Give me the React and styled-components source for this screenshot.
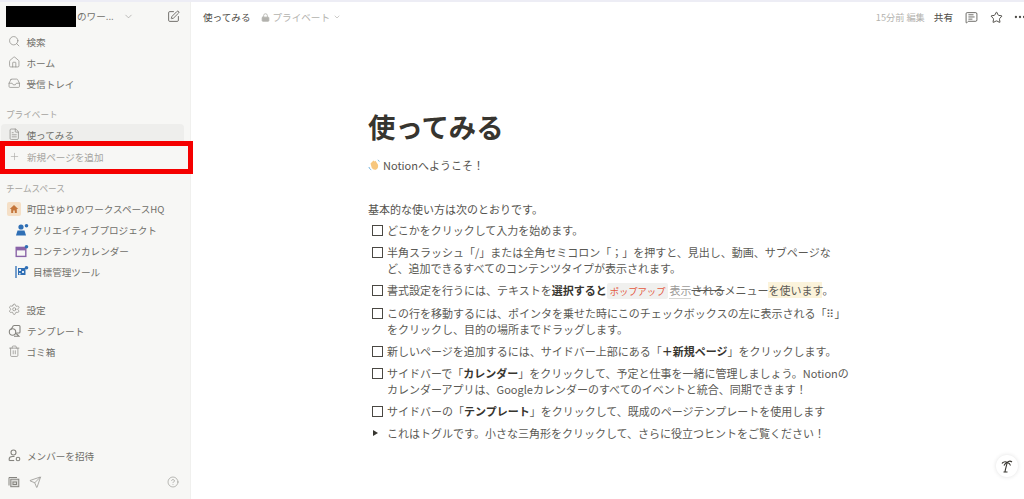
import React from 'react';
import styled, { createGlobalStyle } from 'styled-components';
import { Search, Home, Inbox, FileText, Plus, Settings, Trash2, Send, CircleHelp, SquarePen, ChevronDown, Lock, MessageSquareText, Star, Ellipsis } from 'lucide-react';

const Global = createGlobalStyle`
  html, body { margin: 0; padding: 0; background: #fff; }
  body { font-family: "Noto Sans CJK JP", "Noto Sans", sans-serif; color: #37352f; overflow: hidden; }
  * { box-sizing: border-box; }
`;
const Page = styled.div`
  width: 1024px; height: 499px; display: flex; flex-direction: column; position: relative; overflow: hidden;
`;
const TopLine = styled.div`height: 2px; background: #ededf5; flex: none;`;
const Body = styled.div`flex: 1; display: flex; min-height: 0;`;
const Sidebar = styled.aside`
  width: 191px; flex: none; background: #f7f7f5; border-right: 1px solid #f0f0ee; display: flex; flex-direction: column; position: relative;
`;
const Workspace = styled.div`
  height: 29px; padding: 0 10px 1px 6px; display: flex; align-items: center; color: #6f6e69; font-size: 9.6px;
`;
const Redact = styled.div`width: 70px; height: 21px; background: #000; flex: none;`;
const WsName = styled.span`white-space: nowrap; margin-left: 1px;`;
const WsChevron = styled.span`margin-left: 9px; display: flex; color: #9b9a97;`;
const WsEdit = styled.span`margin-left: auto; display: flex; color: #55534e;`;
const Nav = styled.nav`display: flex; flex-direction: column; margin-top: ${p => p.$top || 0}px;`;
const Row = styled.div`
  height: 21px; display: flex; align-items: center; gap: ${p => p.$gap || 6}px; padding-left: ${p => p.$indent || 7}px; margin: ${p => p.$mt || 0}px 6px 0 1px;
  font-size: 9.6px; color: ${p => p.$muted ? '#a5a4a0' : '#6f6e69'}; border-radius: 4px; white-space: nowrap;
  background: ${p => p.$active ? '#eeeeec' : 'transparent'};
  svg { flex: none; color: ${p => p.$muted ? '#a5a4a0' : '#85847f'}; }
`;
const SectionLabel = styled.div`
  height: 14px; margin-top: ${p => p.$top}px; margin-bottom: ${p => p.$bottom}px; padding-left: 6px; font-size: 8.6px; line-height: 14px; color: #a5a4a0;
`;
const HqIcon = styled.span`
  width: 14px; height: 14px; margin-left: -1px; border-radius: 2px; background: #f5dfc6; display: flex; align-items: center; justify-content: center;
`;
const Spacer = styled.div`flex: 1;`;
const BottomBar = styled.div`
  height: 26px; margin: 3px 0 4px; padding: 0 11px 0 8px; display: flex; align-items: center; gap: 9px; color: #85847f;
`;
const HelpWrap = styled.span`margin-left: auto; display: flex;`;
const RedBox = styled.div`
  position: absolute; left: 0; top: 139px; width: 193px; height: 33px; border: 5px solid #f50000; z-index: 2;
`;
const Main = styled.main`flex: 1; display: flex; flex-direction: column; min-width: 0; position: relative;`;
const Header = styled.header`
  height: 30px; flex: none; display: flex; align-items: center; padding-left: 12px; font-size: 9.6px; white-space: nowrap;
`;
const Crumb = styled.span`color: #4e4c47;`;
const Privacy = styled.span`
  display: flex; align-items: center; gap: 3px; margin-left: 10px; color: #b3b2ae;
  svg.lock rect { fill: currentColor; }
`;
const HeaderRight = styled.div`margin-left: auto; display: flex; align-items: center; height: 100%; color: #4e4c47; margin-right: -3px;`;
const Edited = styled.span`color: #b3b2ae; font-size: 9.2px; margin-right: 9px;`;
const Share = styled.span`margin-right: 12px;`;
const HIcon = styled.span`display: flex; margin-right: ${p => p.$gap}px; color: #4e4c47;`;
const Article = styled.article`
  width: 484px; margin-left: 177px; padding-top: 75px; display: flex; flex-direction: column;
`;
const Title = styled.h1`
  margin: 0; font-size: 27.4px; line-height: 38px; font-weight: 700; color: #37352f;
`;
const Welcome = styled.p`
  margin: 12px 0 0; height: 16px; font-size: 11px; line-height: 16px; color: #55534e; display: flex; align-items: center; gap: 3px;
`;
const Intro = styled.p`
  margin: 28px 0 0; font-size: 11px; line-height: 16px; color: #55534e;
`;
const List = styled.ul`list-style: none; margin: 2px 0 0; padding: 0; display: flex; flex-direction: column;`;
const Item = styled.li`
  display: flex; padding: 3px 0; font-size: 11px; line-height: 16.05px; color: #5b5a55;
`;
const Check = styled.span`
  width: 11px; height: 11px; flex: none; margin: 3px 4px 0 4px; border: 1.4px solid #4a4843;
`;
const Toggle = styled.span`
  width: 0; height: 0; flex: none; margin: 5px 9px 0 5px; border-left: 5px solid #37352f; border-top: 3.2px solid transparent; border-bottom: 3.2px solid transparent;
`;
const ItemText = styled.span`flex: 1; white-space: nowrap;`;
const Strong = styled.b`font-weight: 700; color: #37352f;`;
const Code = styled.span`
  color: #e4593f; background: #f0f0ee; border-radius: 2px; padding: 1px 3px; margin: 0 1px 0 0; font-size: 9.3px;
`;
const Under = styled.span`color: #9b9a97; border-bottom: 1px solid #d8d8d5;`;
const Strike = styled.span`text-decoration: line-through; color: #5b5a55;`;
const Mark = styled.span`background: #fbf3db;`;
const FloatBtn = styled.div`
  position: absolute; right: 6px; bottom: 22px; width: 22px; height: 22px; border-radius: 50%; background: #fff; box-shadow: 0 0 4px rgba(0,0,0,.12);
  display: flex; align-items: center; justify-content: center;
`;

const s = { size: 12.5, strokeWidth: 1.3 };

const ProjectIcon = () => (
  <svg width="14" height="14" viewBox="0 0 14 14">
    <circle cx="6" cy="4" r="2.6" fill="#2f6fb5" />
    <path d="M1 12.5 2.5 7.5h7L11 12.5Z" fill="#2f6fb5" />
    <circle cx="11.5" cy="2.8" r="1.8" fill="#2f6fb5" />
  </svg>
);
const CalIcon = () => (
  <svg width="14" height="14" viewBox="0 0 14 14">
    <rect x="1.2" y="3.4" width="9.6" height="9" fill="none" stroke="#8a64a8" strokeWidth="1.4" />
    <rect x="1.2" y="3.4" width="9.6" height="3" fill="#8a64a8" />
    <circle cx="11.5" cy="2.8" r="1.8" fill="#2f6fb5" />
  </svg>
);
const GoalIcon = () => (
  <svg width="14" height="14" viewBox="0 0 14 14">
    <path d="M1 1v12" stroke="#2f6fb5" strokeWidth="1.3" />
    <path d="M3 3h7.5v7H3Z" fill="#2f6fb5" />
    <path d="M4 4h2v2H4Zm3 2h2v2H7Zm-3 2h1.600v1.500H4Z" fill="#dfe9f4" />
    <circle cx="11.5" cy="2.8" r="1.8" fill="#2f6fb5" />
  </svg>
);
const HouseIcon = () => (
  <svg width="10" height="10" viewBox="0 0 10 10">
    <path d="M5 1 .8 5h1.400v4h2V6.500h1.600V9h2V5h1.400Z" fill="#c4753a" />
  </svg>
);
const TemplateIcon = () => (
  <svg width="13" height="13" viewBox="0 0 13 13" fill="none" stroke="currentColor" strokeWidth="1.100">
    <path d="M5.500 1.500h5.500a1 1 0 0 1 1 1V8a1 1 0 0 1-1 1H8.200" />
    <path d="M5.500 1.500 2.800 5.800" />
    <circle cx="4.500" cy="8" r="3.200" />
    <path d="M8.200 9.500l2.800 2.800H6" />
  </svg>
);
const InviteIcon = () => (
  <svg width="13" height="13" viewBox="0 0 13 13" fill="none" stroke="currentColor" strokeWidth="1.100">
    <circle cx="5.500" cy="3.500" r="2.500" />
    <path d="M1.200 11.500V10c0-1.500 1.500-2.500 3.300-2.500h2" />
    <path d="M1.200 11.500h5" />
    <circle cx="10" cy="10" r="1.800" />
  </svg>
);
const WalletIcon = () => (
  <svg width="12" height="12" viewBox="0 0 12 12" fill="none" stroke="#85847f" strokeWidth="1">
    <path d="M1 9.500V1.500h8" />
    <rect x="2.800" y="3.200" width="8" height="7.500" fill="#dcdcd9" />
    <rect x="5" y="6" width="3.500" height="2.500" />
  </svg>
);
const Wave = () => (
  <svg width="12" height="12" viewBox="0 0 12 12">
    <path d="M2.500 4.500 5.500 1.500l1 1 1-.8 2.500 4c.5 2.500-.5 5-3 5-1.500 0-2.500-.7-3.300-2Z" fill="#f7c77e" />
    <path d="M1 8c.2 1.300 1 2.300 2.200 2.800M9.800 1c.8.300 1.300.9 1.500 1.600" stroke="#6fb2e0" strokeWidth="1" fill="none" />
  </svg>
);
const Palm = () => (
  <svg width="14" height="14" viewBox="0 0 14 14" fill="none" stroke="#37352f" strokeWidth="1.100">
    <path d="M5 13c.3-3 1.500-6 2.200-9.500M3.500 13h4" />
    <path d="M2 4.500C3 2.800 5.500 2.500 7.200 3.500c1.500-1.500 3.500-1.500 4.800-.5M7.200 3.500c1.500.3 3 1.500 3.300 3M7.200 3.500C6 4 4.500 5 4 6.500" />
  </svg>
);

export default function App() {
  return (
    <Page>
      <Global />
      <TopLine />
      <Body>
        <Sidebar>
          <Workspace>
            <Redact />
            <WsName>のワー...</WsName>
            <WsChevron><ChevronDown size={11} strokeWidth={1.4} /></WsChevron>
            <WsEdit><SquarePen size={13} strokeWidth={1.5} /></WsEdit>
          </Workspace>
          <Nav>
            <Row><Search {...s} />検索</Row>
            <Row><Home {...s} />ホーム</Row>
            <Row><Inbox {...s} />受信トレイ</Row>
          </Nav>
          <SectionLabel $top={13} $bottom={3}>プライベート</SectionLabel>
          <Nav>
            <Row $active><FileText {...s} />使ってみる</Row>
            <Row $muted $mt={1} $indent={8} $gap={7}><Plus size={11} strokeWidth={1.3} />新規ページを追加</Row>
          </Nav>
          <SectionLabel $top={14} $bottom={3}>チームスペース</SectionLabel>
          <Nav>
            <Row $gap={6}><HqIcon><HouseIcon /></HqIcon>町田さゆりのワークスペースHQ</Row>
            <Row $indent={14} $gap={4}><ProjectIcon />クリエイティブプロジェクト</Row>
            <Row $indent={14} $gap={4}><CalIcon />コンテンツカレンダー</Row>
            <Row $indent={14} $gap={4}><GoalIcon />目標管理ツール</Row>
          </Nav>
          <Nav $top={17}>
            <Row><Settings {...s} />設定</Row>
            <Row><TemplateIcon />テンプレート</Row>
            <Row><Trash2 {...s} />ゴミ箱</Row>
          </Nav>
          <Spacer />
          <Nav>
            <Row><InviteIcon />メンバーを招待</Row>
          </Nav>
          <BottomBar>
            <WalletIcon />
            <Send {...s} />
            <HelpWrap><CircleHelp size={12} strokeWidth={1.1} /></HelpWrap>
          </BottomBar>
          <RedBox />
        </Sidebar>
        <Main>
          <Header>
            <Crumb>使ってみる</Crumb>
            <Privacy>
              <Lock className="lock" size={9} strokeWidth={2.2} />プライベート<ChevronDown size={8} />
            </Privacy>
            <HeaderRight>
              <Edited>15分前 編集</Edited>
              <Share>共有</Share>
              <HIcon $gap={12}><MessageSquareText size={13} strokeWidth={1.5} /></HIcon>
              <HIcon $gap={10}><Star size={13} strokeWidth={1.8} /></HIcon>
              <HIcon $gap={0}><Ellipsis size={14} strokeWidth={2} /></HIcon>
            </HeaderRight>
          </Header>
          <Article>
            <Title>使ってみる</Title>
            <Welcome><Wave />Notionへようこそ！</Welcome>
            <Intro>基本的な使い方は次のとおりです。</Intro>
            <List>
              <Item><Check /><ItemText>どこかをクリックして入力を始めます。</ItemText></Item>
              <Item><Check /><ItemText>半角スラッシュ「/」または全角セミコロン「；」を押すと、見出し、動画、サブページな<br />ど、追加できるすべてのコンテンツタイプが表示されます。</ItemText></Item>
              <Item><Check /><ItemText>書式設定を行うには、テキストを<Strong>選択すると</Strong><Code>ポップアップ</Code><Under>表示</Under><Strike>される</Strike>メニュー<Mark>を使います</Mark>。</ItemText></Item>
              <Item><Check /><ItemText>この行を移動するには、ポインタを乗せた時にこのチェックボックスの左に表示される「⠿」<br />をクリックし、目的の場所までドラッグします。</ItemText></Item>
              <Item><Check /><ItemText>新しいページを追加するには、サイドバー上部にある「<Strong>＋新規ページ</Strong>」をクリックします。</ItemText></Item>
              <Item><Check /><ItemText>サイドバーで「<Strong>カレンダー</Strong>」をクリックして、予定と仕事を一緒に管理しましょう。Notionの<br />カレンダーアプリは、Googleカレンダーのすべてのイベントと統合、同期できます！</ItemText></Item>
              <Item><Check /><ItemText>サイドバーの「<Strong>テンプレート</Strong>」をクリックして、既成のページテンプレートを使用します</ItemText></Item>
              <Item><Toggle /><ItemText>これはトグルです。小さな三角形をクリックして、さらに役立つヒントをご覧ください！</ItemText></Item>
            </List>
          </Article>
          <FloatBtn><Palm /></FloatBtn>
        </Main>
      </Body>
    </Page>
  );
}
